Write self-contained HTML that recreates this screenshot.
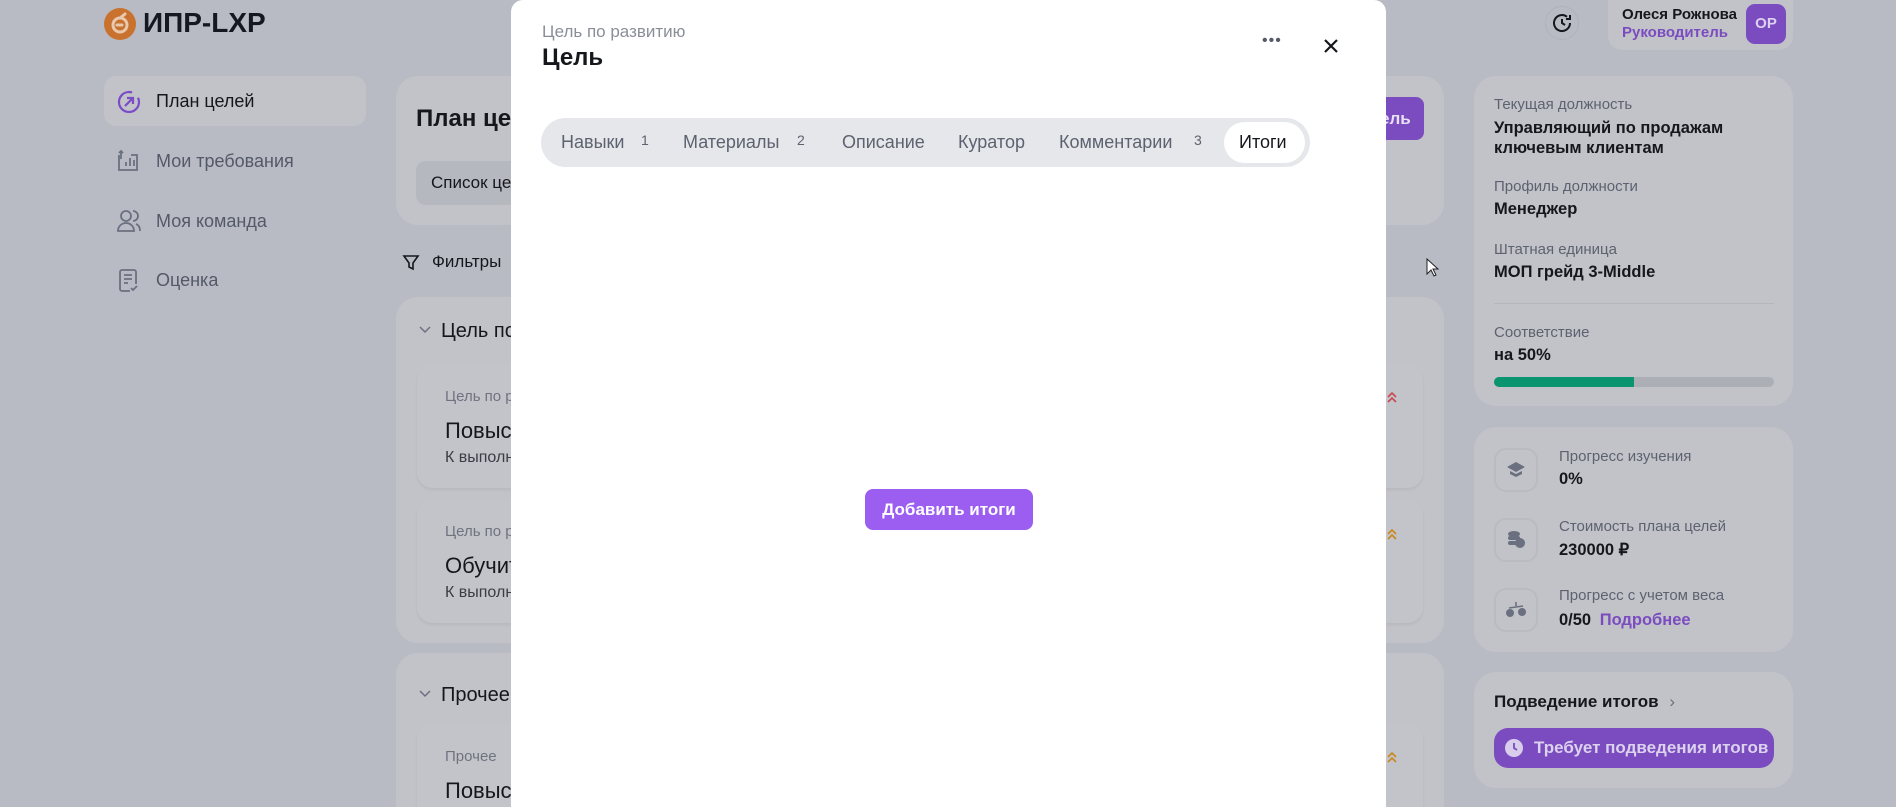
<!DOCTYPE html>
<html style="overflow:hidden"><head><meta charset="utf-8"><style>
*{box-sizing:border-box;margin:0;padding:0}
html,body{width:1896px;height:807px;overflow:hidden}
body{background:#b8bbc4;font-family:"Liberation Sans","Noto Sans CJK SC",sans-serif;color:#15171c}
#w{position:relative;width:1896px;height:807px;overflow:hidden;background:#b8bbc4}
.a{position:absolute;white-space:nowrap}
.card{position:absolute;background:#c2c3c8;border-radius:22px}
.inner{position:absolute;background:#c3c4c9;border-radius:16px;box-shadow:0 2px 3px rgba(0,0,0,0.06)}
.g{color:#5d6270}
.nav{font-size:18px;color:#545968}
.ib{position:absolute;width:44px;height:44px;border:2px solid #b9bbc1;border-radius:12px}
</style></head><body><div id="w">
<div class="a" style="left:104px;top:8px;width:32px;height:32px;border-radius:50%;background:#c9712e"></div>
<svg class="a" style="left:104px;top:8px" width="32" height="32" viewBox="0 0 32 32"><circle cx="16" cy="17" r="7" fill="none" stroke="#e9c9ad" stroke-width="3"/><path d="M13 17h5M16 10l5-4" stroke="#e9c9ad" stroke-width="3" fill="none" stroke-linecap="round"/></svg>
<div class="a" style="left:143px;top:7px;font-size:28px;font-weight:bold;color:#151820">ИПР-LXP</div>
<div class="a" style="left:104px;top:76px;width:262px;height:50px;border-radius:12px;background:#c2c3c8"></div>
<svg class="a" style="left:116px;top:89px" width="26" height="26" viewBox="0 0 26 26"><circle cx="13" cy="13" r="10" fill="none" stroke="#7a4cc8" stroke-width="2.2" stroke-dasharray="50 8"/><path d="M9 17l8-8M11 9h6v6" stroke="#7a4cc8" stroke-width="2.2" fill="none"/></svg>
<div class="a nav" style="left:156px;top:91px;color:#15171c">План целей</div>
<svg class="a" style="left:116px;top:149px" width="24" height="24" viewBox="0 0 24 24" fill="none" stroke="#6b7080" stroke-width="1.8"><path d="M3 6v15h18V6h-6M5 2v8M3 4l2-2 2 2M10 17v-4M14 17V9M18 17v-6"/></svg>
<div class="a nav" style="left:156px;top:151px">Мои требования</div>
<svg class="a" style="left:116px;top:208px" width="26" height="26" viewBox="0 0 26 26" fill="none" stroke="#6b7080" stroke-width="1.8"><circle cx="10" cy="8" r="5"/><path d="M2 23c0-5 4-8 8-8s8 3 8 8zM17 3a5 5 0 0 1 0 10M20 16c3 1 4 4 4 7"/></svg>
<div class="a nav" style="left:156px;top:211px">Моя команда</div>
<svg class="a" style="left:118px;top:269px" width="22" height="24" viewBox="0 0 22 24" fill="none" stroke="#6b7080" stroke-width="1.8"><path d="M12 22H4a2 2 0 0 1-2-2V3a2 2 0 0 1 2-2h12a2 2 0 0 1 2 2v12M6 6h8M6 10h8M6 14h4M13 19l2 2 4-4"/></svg>
<div class="a nav" style="left:156px;top:270px">Оценка</div>
<div class="card" style="left:396px;top:76px;width:1048px;height:149px"></div>
<div class="a" style="left:416px;top:105px;font-size:24px;font-weight:bold">План целей</div>
<div class="a" style="left:1371px;top:97px;width:53px;height:43px;border-radius:8px;background:#7a4cc0"></div>
<div class="a" style="left:1380px;top:109px;font-size:17px;font-weight:bold;color:#e8e0f5">ель</div>
<div class="a" style="left:416px;top:161px;width:200px;height:44px;border-radius:10px;background:#b6b8bf"></div>
<div class="a" style="left:431px;top:173px;font-size:17px">Список целей</div>
<svg class="a" style="left:402px;top:254px" width="18" height="18" viewBox="0 0 18 18"><path d="M2 2h14l-5 7v6l-4-2V9z" fill="none" stroke="#15171c" stroke-width="1.6"/></svg>
<div class="a" style="left:432px;top:252px;font-size:17px">Фильтры</div>
<div class="card" style="left:396px;top:297px;width:1048px;height:346px"></div>
<svg class="a" style="left:419px;top:326px" width="12" height="8" viewBox="0 0 12 8"><path d="M1 1l5 5 5-5" stroke="#6b7080" stroke-width="1.5" fill="none"/></svg>
<div class="a" style="left:441px;top:320px;font-size:20px">Цель по развитию</div>
<div class="inner" style="left:417px;top:365px;width:1006px;height:123px"></div>
<div class="a" style="left:445px;top:388px;font-size:15px;color:#6f7380">Цель по развитию</div>
<div class="a" style="left:445px;top:418px;font-size:22px">Повысить</div>
<div class="a" style="left:445px;top:449px;font-size:16px;color:#3a3d46">К выполнению</div>
<div class="inner" style="left:417px;top:500px;width:1006px;height:123px"></div>
<div class="a" style="left:445px;top:523px;font-size:15px;color:#6f7380">Цель по развитию</div>
<div class="a" style="left:445px;top:553px;font-size:22px">Обучить</div>
<div class="a" style="left:445px;top:584px;font-size:16px;color:#3a3d46">К выполнению</div>
<div class="card" style="left:396px;top:653px;width:1048px;height:154px;border-radius:22px 22px 0 0"></div>
<svg class="a" style="left:419px;top:690px" width="12" height="8" viewBox="0 0 12 8"><path d="M1 1l5 5 5-5" stroke="#6b7080" stroke-width="1.5" fill="none"/></svg>
<div class="a" style="left:441px;top:684px;font-size:20px">Прочее</div>
<div class="inner" style="left:417px;top:723px;width:1006px;height:84px;border-radius:16px 16px 0 0"></div>
<div class="a" style="left:445px;top:748px;font-size:15px;color:#6f7380">Прочее</div>
<div class="a" style="left:445px;top:778px;font-size:22px">Повысить</div>
<svg class="a" style="left:1386px;top:390px" width="12" height="14" viewBox="0 0 12 14" fill="none" stroke="#c8484f" stroke-width="1.6"><path d="M2 7l4-4 4 4M2 12l4-4 4 4"/></svg>
<svg class="a" style="left:1386px;top:527px" width="12" height="14" viewBox="0 0 12 14" fill="none" stroke="#c8881c" stroke-width="1.6"><path d="M2 7l4-4 4 4M2 12l4-4 4 4"/></svg>
<svg class="a" style="left:1386px;top:750px" width="12" height="14" viewBox="0 0 12 14" fill="none" stroke="#c8881c" stroke-width="1.6"><path d="M2 7l4-4 4 4M2 12l4-4 4 4"/></svg>
<svg class="a" style="left:1426px;top:258px" width="14" height="20" viewBox="0 0 14 20"><path d="M1 1v15l4-4 3 6 2-1-3-6h5z" fill="#fff" stroke="#222" stroke-width="1"/></svg>
<div class="a" style="left:1545px;top:6px;width:34px;height:34px;border-radius:50%;border:1px solid #b0b2b9"></div>
<svg class="a" style="left:1550px;top:11px" width="24" height="24" viewBox="0 0 24 24" fill="none" stroke="#15171c" stroke-width="2"><path d="M20 12a8 8 0 1 1-3-6.2M20 4v4h-4M12 8v4l3 2"/></svg>
<div class="a" style="left:1608px;top:0;width:185px;height:50px;border-radius:0 0 14px 14px;background:#c2c3c8"></div>
<div class="a" style="left:1622px;top:6px;font-size:15px;font-weight:bold">Олеся Рожнова</div>
<div class="a" style="left:1622px;top:24px;font-size:15px;font-weight:bold;color:#7a4cc0">Руководитель</div>
<div class="a" style="left:1746px;top:4px;width:40px;height:40px;border-radius:9px;background:#7a4cc0;color:#ddd0f0;font-size:15px;font-weight:bold;text-align:center;line-height:40px">ОР</div>
<div class="card" style="left:1474px;top:76px;width:319px;height:330px"></div>
<div class="a g" style="left:1494px;top:96px;font-size:15px">Текущая должность</div>
<div class="a" style="left:1494px;top:118px;font-size:16.5px;font-weight:bold;line-height:20px">Управляющий по продажам<br>ключевым клиентам</div>
<div class="a g" style="left:1494px;top:178px;font-size:15px">Профиль должности</div>
<div class="a" style="left:1494px;top:200px;font-size:16.5px;font-weight:bold">Менеджер</div>
<div class="a g" style="left:1494px;top:241px;font-size:15px">Штатная единица</div>
<div class="a" style="left:1494px;top:263px;font-size:16.5px;font-weight:bold">МОП грейд 3-Middle</div>
<div class="a" style="left:1494px;top:303px;width:280px;height:1px;background:#b4b6bd"></div>
<div class="a g" style="left:1494px;top:324px;font-size:15px">Соответствие</div>
<div class="a" style="left:1494px;top:346px;font-size:16.5px;font-weight:bold">на 50%</div>
<div class="a" style="left:1494px;top:377px;width:280px;height:10px;border-radius:5px;background:#adafb6"></div>
<div class="a" style="left:1494px;top:377px;width:140px;height:10px;border-radius:5px 0 0 5px;background:#0a9470"></div>
<div class="card" style="left:1474px;top:427px;width:319px;height:225px"></div>
<div class="ib" style="left:1494px;top:448px"></div>
<svg class="a" style="left:1506px;top:461px" width="20" height="18" viewBox="0 0 20 18"><path d="M10 1l9 5-9 5-9-5z" fill="#6b7080"/><path d="M4 10v3l6 3 6-3v-3l-6 3z" fill="#6b7080"/></svg>
<div class="a g" style="left:1559px;top:448px;font-size:15px">Прогресс изучения</div>
<div class="a" style="left:1559px;top:470px;font-size:16.5px;font-weight:bold">0%</div>
<div class="ib" style="left:1494px;top:518px"></div>
<svg class="a" style="left:1506px;top:530px" width="20" height="20" viewBox="0 0 20 20" fill="#6b7080"><ellipse cx="8" cy="4" rx="6" ry="3"/><rect x="2" y="6" width="12" height="4" rx="2"/><rect x="2" y="11" width="10" height="4" rx="2"/><circle cx="14" cy="13" r="5"/></svg>
<div class="a g" style="left:1559px;top:518px;font-size:15px">Стоимость плана целей</div>
<div class="a" style="left:1559px;top:540px;font-size:16.5px;font-weight:bold">230000 ₽</div>
<div class="ib" style="left:1494px;top:588px"></div>
<svg class="a" style="left:1505px;top:600px" width="22" height="20" viewBox="0 0 22 20" fill="#6b7080"><path d="M11 2v4" stroke="#6b7080" stroke-width="1.6"/><path d="M4 8l14-2" stroke="#6b7080" stroke-width="1.6"/><circle cx="5" cy="13" r="4"/><circle cx="17" cy="12" r="4"/></svg>
<div class="a g" style="left:1559px;top:587px;font-size:15px">Прогресс с учетом веса</div>
<div class="a" style="left:1559px;top:611px;font-size:16.5px;font-weight:bold">0/50 <span style="color:#7a4cc0;margin-left:4px">Подробнее</span></div>
<div class="card" style="left:1474px;top:672px;width:319px;height:116px"></div>
<div class="a" style="left:1494px;top:692px;font-size:17px;font-weight:bold">Подведение итогов <span style="color:#6b7080;font-weight:normal;margin-left:6px">›</span></div>
<div class="a" style="left:1494px;top:728px;width:280px;height:40px;border-radius:14px;background:#7a4cc0"></div>
<div class="a" style="left:1505px;top:739px;width:18px;height:18px;border-radius:50%;background:#d8cdea"></div>
<svg class="a" style="left:1505px;top:739px" width="18" height="18" viewBox="0 0 18 18"><path d="M9 4v5l3 2" stroke="#7a4cc0" stroke-width="1.8" fill="none"/></svg>
<div class="a" style="left:1534px;top:738px;font-size:17px;font-weight:bold;color:#dcd2ee">Требует подведения итогов</div>
<div class="a" style="left:511px;top:0;width:875px;height:807px;background:#fff;border-radius:12px 12px 0 0"></div>
<div class="a" style="left:542px;top:22px;font-size:17px;color:#8a8e99">Цель по развитию</div>
<div class="a" style="left:542px;top:44px;font-size:24px;font-weight:bold;color:#15171c">Цель</div>
<div class="a" style="left:1262px;top:32px;font-size:16px;color:#555a66;letter-spacing:1px">•••</div>
<svg class="a" style="left:1323px;top:38px" width="16" height="16" viewBox="0 0 16 16"><path d="M2 2l12 12M14 2L2 14" stroke="#15171c" stroke-width="2.2"/></svg>
<div class="a" style="left:541px;top:118px;width:769px;height:49px;border-radius:25px;background:#e6e7eb"></div>
<div class="a" style="left:1224px;top:122px;width:81px;height:41px;border-radius:21px;background:#fff"></div>
<div class="a" style="left:561px;top:132px;font-size:18px;color:#5d6270">Навыки</div>
<div class="a" style="left:641px;top:132px;font-size:14px;color:#5d6270">1</div>
<div class="a" style="left:683px;top:132px;font-size:18px;color:#5d6270">Материалы</div>
<div class="a" style="left:797px;top:132px;font-size:14px;color:#5d6270">2</div>
<div class="a" style="left:842px;top:132px;font-size:18px;color:#5d6270">Описание</div>
<div class="a" style="left:958px;top:132px;font-size:18px;color:#5d6270">Куратор</div>
<div class="a" style="left:1059px;top:132px;font-size:18px;color:#5d6270">Комментарии</div>
<div class="a" style="left:1194px;top:132px;font-size:14px;color:#5d6270">3</div>
<div class="a" style="left:1239px;top:132px;font-size:18px;color:#15171c">Итоги</div>
<div class="a" style="left:865px;top:489px;width:168px;height:41px;border-radius:8px;background:#9b5ef0;color:#fff;font-size:17px;font-weight:bold;text-align:center;line-height:41px">Добавить итоги</div>
</div></body></html>
